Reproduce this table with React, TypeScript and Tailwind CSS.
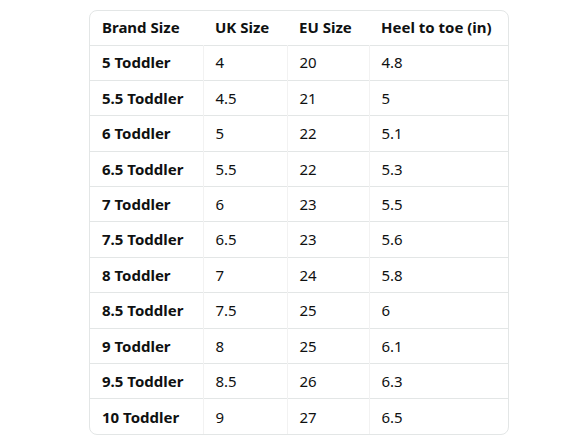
import React from "react";

const rows: [string, string, string, string][] = [
  ["5 Toddler", "4", "20", "4.8"],
  ["5.5 Toddler", "4.5", "21", "5"],
  ["6 Toddler", "5", "22", "5.1"],
  ["6.5 Toddler", "5.5", "22", "5.3"],
  ["7 Toddler", "6", "23", "5.5"],
  ["7.5 Toddler", "6.5", "23", "5.6"],
  ["8 Toddler", "7", "24", "5.8"],
  ["8.5 Toddler", "7.5", "25", "6"],
  ["9 Toddler", "8", "25", "6.1"],
  ["9.5 Toddler", "8.5", "26", "6.3"],
  ["10 Toddler", "9", "27", "6.5"],
];

export default function App() {
  return (
    <div
      className="w-[588px] h-[441px] bg-white pt-[10px] pl-[89px]"
      style={{ fontFamily: '"Noto Sans", "Open Sans", Arial, sans-serif' }}
    >
      <div className="w-[420px] border border-[#e3e6e6] rounded-[8px] overflow-hidden text-[#0f1111] text-[15px]">
        <table className="w-full border-collapse table-fixed">
          <colgroup>
            <col className="w-[113px]" />
            <col className="w-[84px]" />
            <col className="w-[82px]" />
            <col />
          </colgroup>
          <thead>
            <tr className="h-[34px]">
              {["Brand Size", "UK Size", "EU Size", "Heel to toe (in)"].map((h) => (
                <th key={h} className="text-left font-bold pl-[12px] pt-0 pb-[1px] align-middle">
                  {h}
                </th>
              ))}
            </tr>
          </thead>
          <tbody>
            {rows.map((r, i) => (
              <tr key={i} className="h-[35.4px] border-t border-[#e3e6e6]">
                <td className="font-bold pl-[12px] align-middle">{r[0]}</td>
                <td className="pl-[12px] border-l border-[#f2f2f2] align-middle">{r[1]}</td>
                <td className="pl-[12px] border-l border-[#f2f2f2] align-middle">{r[2]}</td>
                <td className="pl-[12px] border-l border-[#f2f2f2] align-middle">{r[3]}</td>
              </tr>
            ))}
          </tbody>
        </table>
      </div>
    </div>
  );
}
